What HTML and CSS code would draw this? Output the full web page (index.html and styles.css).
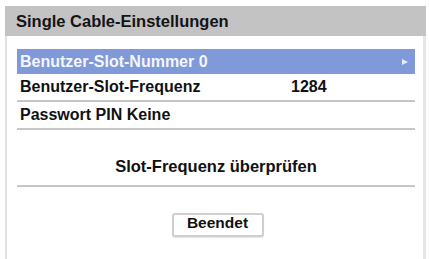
FILE: index.html
```html
<!DOCTYPE html>
<html>
<head>
<meta charset="utf-8">
<link rel="stylesheet" href="styles.css">
</head>
<body>
<div class="dialog">
  <div class="title">Single Cable-Einstellungen</div>
  <div class="panel">
    <div class="row selected"><span>Benutzer-Slot-Nummer 0</span><span class="arrow"></span></div>
    <div class="row sep"><span class="label">Benutzer-Slot-Frequenz</span><span class="value">1284</span></div>
    <div class="row sep"><span>Passwort PIN Keine</span></div>
    <div class="check sep">Slot-Frequenz überprüfen</div>
    <div class="actions"><button class="btn">Beendet</button></div>
  </div>
</div>
</body>
</html>
```
FILE: styles.css
```css
html, body {
  margin: 0;
  padding: 0;
  background: #ffffff;
}
body {
  font-family: "Liberation Sans", Arial, sans-serif;
  font-weight: bold;
  color: #111;
  width: 429px;
  height: 259px;
  overflow: hidden;
}
.dialog {
  margin: 6px 3px 0 5px;
  height: 253px;
  display: flex;
  flex-direction: column;
}
.title {
  height: 30px;
  background: #c3c3c3;
  font-size: 16.5px;
  line-height: 30px;
  padding-left: 11px;
  color: #141414;
}
.panel {
  flex: 1;
  border-left: 2px solid #e2e2e2;
  border-right: 3px solid #e6e6e6;
  padding: 13px 8px 0 10px;
  display: flex;
  flex-direction: column;
}
.row {
  height: 25px;
  display: flex;
  align-items: center;
  font-size: 16px;
  padding-left: 3px;
  position: relative;
}
.row.selected {
  background: #7f99d9;
  color: #f4f6fc;
}
.arrow {
  position: absolute;
  right: 7px;
  top: 10px;
  width: 0;
  height: 0;
  border-left: 6px solid #e6ecfa;
  border-top: 3px solid transparent;
  border-bottom: 3px solid transparent;
}
.sep {
  border-bottom: 2px solid #c6c6c6;
}
.row.sep {
  height: 26px;
}
.row .label {
  width: 271px;
}
.check {
  height: 57px;
  display: flex;
  align-items: flex-end;
  justify-content: center;
  font-size: 16.5px;
  line-height: 19px;
  padding-bottom: 9px;
  box-sizing: border-box;
}
.actions {
  display: flex;
  justify-content: center;
  padding-top: 26px;
}
.btn {
  width: 92px;
  height: 24px;
  font-family: "Liberation Sans", Arial, sans-serif;
  font-weight: bold;
  font-size: 15.5px;
  color: #111;
  background: #fff;
  border: 2px solid #cfcfcf;
  border-radius: 3px;
  padding: 0 0 5px 0;
  line-height: 16px;
  box-shadow: 0 1px 1px #e4e4e4;
  margin-left: 3px;
}
```
